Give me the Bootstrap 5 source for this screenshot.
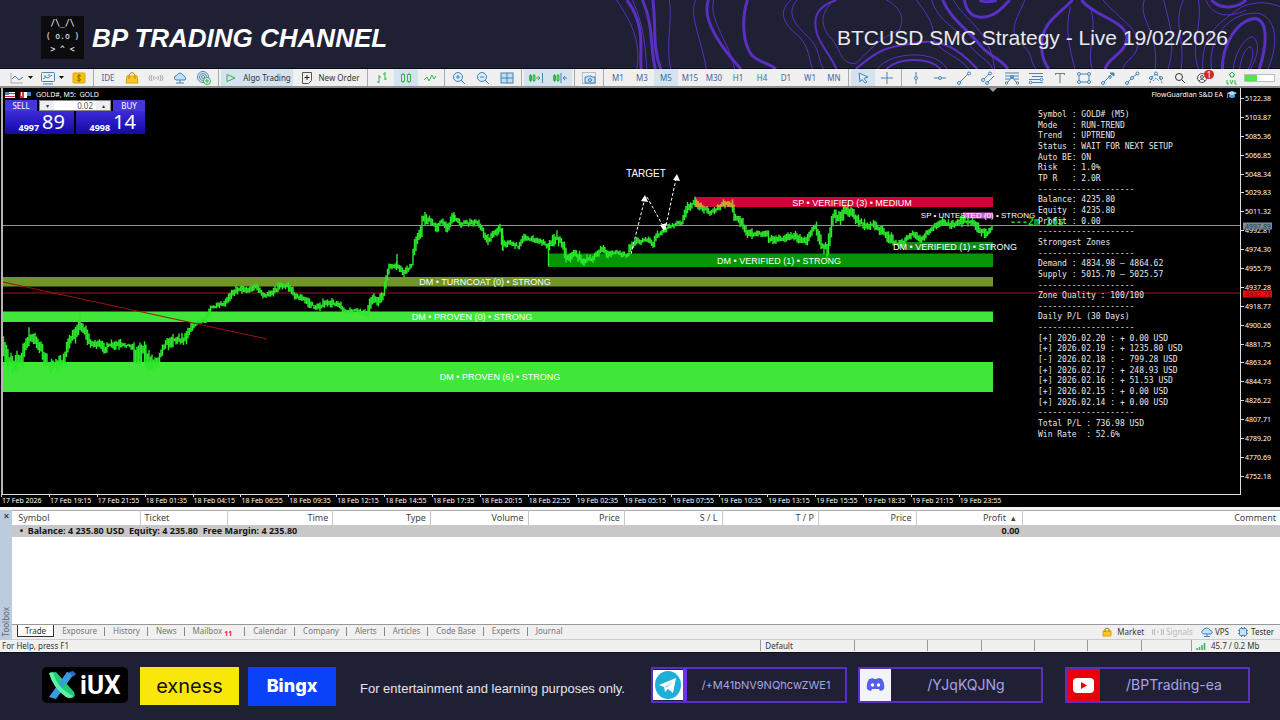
<!DOCTYPE html>
<html lang="en">
<head>
<meta charset="utf-8">
<meta name="viewport" content="width=device-width, initial-scale=1">
<title>BP Trading Channel</title>
<link href="https://cdn.jsdelivr.net/npm/bootstrap@5.3.0/dist/css/bootstrap.min.css" rel="stylesheet">
<style>
  :root { --navy: #1f2034; --violet: #5a2fc4; --ui: "Noto Sans", "Open Sans", sans-serif; }
  body { background: var(--navy); font-family: var(--ui); font-size: 8px; line-height: 12px; color: #222; }
  button { border: 0; background: none; padding: 0; color: inherit; font: inherit; }
  svg { display: block; }

  .banner { height: 69px; padding: 7px 52px 0 41px; color: #fff; border-bottom: 1px solid #0c0c16; }
  .contours { top: 0; right: 0; width: 53.125%; height: 69px; }
  .contours path { fill: none; stroke: var(--violet); stroke-width: 1; vector-effect: non-scaling-stroke; }
  .contours .wide { stroke-width: 3; }
  .catbox { width: 43px; height: 43px; background: #0c0c0e; font: 8px/13px "DejaVu Sans Mono", monospace; margin: 0; overflow: hidden; padding-top: 1px; }
  .brand-title { font: italic 700 26px/44px "Liberation Sans", sans-serif; margin: 0; }
  .show-title { font: 21px/44px "Liberation Sans", sans-serif; margin: 0; color: #e9e9ee; }

  .toolbar { height: 19px; background: #f0f0f0; border-bottom: 2px solid #8e8e8e; padding-left: 5px; color: #3b6a99; overflow: hidden; }
  .toolbar button { width: 24px; height: 17px; flex: none; display: flex; align-items: center; justify-content: center; }
  .toolbar .on { background: #d5e2f0; }
  .toolbar .w-drop { width: 31px; gap: 3px; }
  .toolbar .w-text { width: 72px; gap: 4px; color: #333; }
  .toolbar svg { flex: none; width: 16px; height: 14px; fill: none; stroke: #4583b8; stroke-width: 1; }
  .toolbar .caret { width: 5px; height: 3px; fill: #111; stroke: none; }
  .toolbar .grn { stroke: #35b545; }
  .toolbar .gry { stroke: #aaa; }
  .divider { flex: none; width: 1px; height: 17px; margin: 0 2px; background: #aaa; }
  .battery { width: 31px; height: 8px; background: linear-gradient(90deg, #4be84b 40%, #fff 40%); border: 1px solid #bbb; }
  .alerts { top: 1px; right: 2px; width: 10px; height: 9px; border-radius: 5px; background: #d12b22; color: #fff; font-size: 8px; line-height: 9px; }

  .chart { flex: 1 0 419px; background: #000; color: #fff; padding-left: 1px; }
  .plot { border-left: 2px solid #b8b4b4; border-bottom: 1px solid #ddd; min-width: 0; }
  .plot > svg { inset: 0; width: 100%; height: 100%; }
  .note { transform: translate(-50%, -50%); font: 9px/10px "Liberation Sans", sans-serif; white-space: nowrap; }
  .note.big { font-size: 10px; }
  .note.tiny { font-size: 8px; }
  .note.clock { color: #21d321; font: 700 10px/10px "DejaVu Sans Mono", monospace; }
  .quote { top: 2px; left: 2px; width: 140px; }
  .quote-name { height: 10px; font-size: 7px; line-height: 10px; gap: 5px; }
  .quote-top { height: 11px; }
  .quote-top button { background: #4536dc; width: 32px; line-height: 11px; color: #fff; }
  .lots { background: #fff; border: 1px solid #888; }
  .lots button { width: 14px; background: #eee; color: #333; font-size: 6px; line-height: 8px; }
  .lots input { width: 42px; border: 0; padding: 0 3px 0 0; text-align: right; font: 8px/9px var(--ui); color: #555; height: 9px; }
  .price { width: 69px; height: 23px; background: linear-gradient(#3b2bd6, #1408a8); line-height: 24px; gap: 3px; padding-right: 9px; }
  .price b { font-size: 9px; line-height: 12px; }
  .price span { font-size: 20px; }
  .ea { top: 2px; right: 3px; font-size: 7px; line-height: 9px; gap: 4px; }
  .stats { top: 22px; right: 50px; bottom: 54px; width: 152px; font: 8px/10px "DejaVu Sans Mono", monospace; white-space: pre; color: #e8e8e8; }
  .axis-y { width: 40px; border-left: 1px solid #ddd; padding: 6px 0 14px; font-size: 7px; line-height: 9px; }
  .axis-y .tick { padding-left: 4px; position: relative; }
  .axis-y .tick::before { content: ""; position: absolute; left: 0; top: 4px; width: 3px; height: 1px; background: #ddd; }
  .tag { left: 2px; width: 29px; height: 7px; font-size: 7px; line-height: 7px; padding-left: 2px; transform: translateY(-50%); }
  .axis-x { height: 12px; font-size: 7px; line-height: 12px; white-space: nowrap; overflow: hidden; }
  .axis-x span { flex: 0 0 3.745%; border-left: 1px solid transparent; border-image: linear-gradient(#ddd 25%, transparent 25%) 1; }

  .toolbox { flex: 0 0 133px; background: #fff; border-top: 3px solid #f4f4f4; }
  .side { width: 12px; background: #bccbdd; color: #222; }
  .side span { writing-mode: vertical-rl; transform: rotate(180deg); color: #5a6472; line-height: 12px; padding-top: 4px; }
  .orders { table-layout: fixed; width: 100%; border-collapse: collapse; border-top: 1px solid #aaa; font-size: 9px; }
  .orders th { font-weight: 400; text-align: right; height: 14px; padding: 0 4px; border-right: 1px solid #c8c8c8; color: #444; line-height: 12px; }
  .orders th.lt { text-align: left; }
  .orders td { background: #c8c8c8; font-weight: 700; height: 12px; padding: 0 3px; line-height: 11px; color: #151515; white-space: pre; }
  .tabs { height: 16px; background: #f0f0f0; border-top: 1px solid #999; border-bottom: 1px solid #ccc; color: #777; white-space: nowrap; overflow: hidden; }
  .tabs a { color: inherit; text-decoration: none; padding: 0 7px 0 8px; line-height: 11px; }
  .tabs .bar { border-right: 1px solid #888; height: 9px; line-height: 8px; margin-top: 2px; }
  .tabs .mail { padding-right: 12px; }
  .tabs .sel { background: #fff; color: #333; border: 1px solid #333; border-top: 0; height: 12px; margin-left: 5px; padding: 0 7px; }
  .tabs sub { color: #d8264a; font-weight: 700; font-size: 7px; line-height: 1; bottom: -2px; }
  .tools { gap: 8px; color: #333; padding-right: 6px; }
  .tools svg { width: 12px; height: 10px; fill: none; stroke: #3d83bd; }
  .status { flex: 0 0 13px; background: #f0f0f0; border-bottom: 1px solid #10101c; color: #333; white-space: nowrap; overflow: hidden; }
  .status span { border-left: 1px solid #999; height: 11px; padding-left: 4px; line-height: 11px; }

  .foot { flex: 0 0 67px; color: #fff; padding: 14px 30px 0 42px; overflow: hidden; }
  .logo { flex: none; }
  .iux { width: 86px; height: 36px; border-radius: 5px; background: #000; font: 700 26px/36px Roboto, sans-serif; margin-right: 12px; padding-left: 5px; gap: 2px; }
  .exness { width: 99px; height: 38px; background: #fae70a; color: #111; font: 20px/38px Inter, sans-serif; margin-right: 9px; }
  .bingx { width: 88px; height: 39px; background: #0a42fa; font: 800 18px/38px Inter, sans-serif; margin-right: 24px; }
  .fine { font: 13px/44px "Liberation Sans", sans-serif; white-space: nowrap; color: #e4e4ea; }
  .social { border: 2px solid var(--violet); height: 36px; color: #a9a2e6; text-decoration: none; font: 14px/32px Inter, sans-serif; flex: none; }
  .social .long { font-size: 11px; }
  .social:hover { color: #fff; }
  .social svg { flex: none; height: 32px; }
</style>
</head>
<body class="d-flex flex-column min-vh-100">

<header class="banner position-relative d-flex align-items-center justify-content-between">
  <svg class="contours position-absolute" viewBox="0 0 1568 206" preserveAspectRatio="none" aria-hidden="true">
    <path d="M38 0C70 60 95 120 85 206M160 0C168 70 150 130 163 206M220 0C205 50 235 120 245 206M75 0C105 90 104 150 108 206"/>
    <path class="wide" d="M62 0C108 80 90 150 95 206M98 0C125 80 115 150 128 206M122 0C130 80 120 140 140 206"/>
    <path class="wide" d="M250 0C232 60 285 150 325 206M340 0C325 60 330 130 350 165C370 190 395 190 405 206"/>
    <path d="M262 0C250 60 300 130 310 206M440 0C405 40 430 80 460 110C485 150 480 170 490 206M455 0C425 40 455 80 480 110C510 150 500 170 515 206"/>
    <path style="stroke-width:2" d="M545 0C500 20 490 50 500 100C515 150 530 160 545 206M590 206C640 150 660 140 720 130C790 110 830 150 870 206M660 206C690 170 760 170 785 206"/>
    <path d="M540 0C505 40 510 80 530 110C560 150 550 190 590 190C620 150 650 110 690 90C705 50 690 20 660 0M640 206C670 150 780 150 800 206"/>
    <path class="wide" d="M790 0C810 60 850 90 880 140C900 170 930 180 940 206M840 0C850 70 900 60 930 20L945 0M875 0C885 8 900 6 915 0"/>
    <path d="M730 0C750 40 770 60 770 120C790 160 830 170 850 206M765 0C775 60 830 90 850 130C870 170 900 180 905 206M815 0C840 60 900 90 910 206M980 0C960 60 940 90 970 130C1000 160 990 180 1005 206"/>
    <path class="wide" d="M1090 0C1060 40 1030 60 1020 110C1015 150 1020 180 1035 206M1110 0C1140 50 1210 60 1215 110C1215 160 1170 170 1165 206"/>
    <path d="M1160 0C1190 50 1240 80 1240 130C1240 170 1210 180 1205 206M1085 20C1070 90 1085 150 1095 206M1130 20C1150 90 1120 150 1135 206M1255 0C1240 60 1290 90 1280 206M1300 0C1310 60 1330 120 1310 206M1345 0C1320 70 1350 120 1340 206M1380 0C1390 80 1360 130 1380 206"/>
    <path class="wide" d="M1410 0C1430 30 1470 25 1490 0M1435 206C1435 130 1470 60 1510 55C1545 60 1535 150 1520 206"/>
    <path d="M1460 206C1465 150 1490 110 1505 110C1525 130 1515 170 1500 206M1475 206C1478 170 1490 140 1500 140C1510 150 1505 180 1495 206M1410 206C1400 120 1450 30 1520 40C1568 60 1560 150 1540 206M1390 206C1385 90 1440 60 1480 20C1520 0 1550 10 1568 20M1397 0C1410 40 1440 60 1490 30"/>
  </svg>
  <div class="d-flex align-items-center position-relative gap-2">
    <pre class="catbox text-center">/\_/\
( o.o )
&gt; ^ &lt;</pre>
    <h1 class="brand-title">BP TRADING CHANNEL</h1>
  </div>
  <h2 class="show-title position-relative">BTCUSD SMC Strategy - Live 19/02/2026</h2>
</header>

<nav class="toolbar d-flex" aria-label="Chart tools">
  <button class="w-drop" aria-label="Chart type"><svg viewBox="0 0 16 14"><path d="M2 2v10h12" stroke="#aaa"/><path d="M3 8l3-3 4 4 4-3"/></svg><svg class="caret" viewBox="0 0 5 3"><path d="M0 0h5L2.500 3z"/></svg></button>
  <button class="w-drop" aria-label="Templates"><svg viewBox="0 0 16 14"><rect x="1.500" y="1.500" width="13" height="9" rx="1"/><path d="M3 8l3-2 2 1 4-3M3 13h10M4 5h2M8 4h2"/></svg><svg class="caret" viewBox="0 0 5 3"><path d="M0 0h5L2.500 3z"/></svg></button>
  <button aria-label="Deposit"><svg viewBox="0 0 16 14"><rect x="2" y="2" width="12" height="10" rx="1" fill="#f5c211" stroke="#e0a800"/><path d="M10 5C8 4 6 4.500 6.500 6S10 7.500 9.500 9 7 9.500 6 9M8 3v8" stroke="#8a6a00"/></svg></button>
  <i class="divider"></i>
  <button>IDE</button>
  <button aria-label="Market"><svg viewBox="0 0 16 14"><path d="M3 5h10l1 7H2z" fill="#f8c81c" stroke="#d9a400"/><path d="M5 8V4q3-5 6 0v4" stroke="#b98a00"/></svg></button>
  <button aria-label="Signals"><svg class="gry" viewBox="0 0 16 14"><path d="M4 4q-2 3 0 6M2 4q-2 3 0 6M12 4q2 3 0 6M14 4q2 3 0 6M6 5q-1 2 0 4M10 5q1 2 0 4"/><circle cx="8" cy="7" r=".5"/></svg></button>
  <button aria-label="VPS"><svg viewBox="0 0 16 14"><path d="M4 9q-3-1-1-4 2 0 2-1 3-4 6 0l1 1q3 1 1 4z" fill="#bfe0f7"/><path d="M8 9v3M4 12h8"/></svg></button>
  <button aria-label="Community"><svg viewBox="0 0 16 14"><circle cx="7" cy="6" r="5.500"/><circle cx="7" cy="6" r="3.500"/><circle cx="7" cy="6" r="1.500"/><circle cx="11" cy="10" r="3.500" fill="#f0f0f0" stroke="#35b545"/><path class="grn" d="M11 8v4M9 10h4"/></svg></button>
  <i class="divider"></i>
  <button class="w-text on"><svg class="grn" viewBox="0 0 16 14"><path d="M4 3.500L12 7l-8 3.500z"/></svg><span>Algo Trading</span></button>
  <button class="w-text"><svg viewBox="0 0 16 14"><path d="M3.500 1.500h9v8l-3 3h-6z" stroke="#555"/><path d="M8 4v5M5.500 6.500h5" stroke="#222"/></svg><span>New Order</span></button>
  <i class="divider"></i>
  <button aria-label="Bars"><svg class="grn" viewBox="0 0 16 14"><path d="M5 4v8M3 11h2M5 6h2M11 1v8M9 3h2M11 8h2"/></svg></button>
  <button class="on" aria-label="Candles"><svg class="grn" viewBox="0 0 16 14"><path d="M3.500 3.500h3v7h-3zM9.500 3.500h3v7h-3zM5 2v1.500M5 10.500V12M11 2v1.500M11 10.500V12"/></svg></button>
  <button aria-label="Line"><svg class="grn" viewBox="0 0 16 14"><path d="M2 9l3-3 2 4 3-6 2 4 2-3"/></svg></button>
  <i class="divider"></i>
  <button aria-label="Zoom in"><svg viewBox="0 0 16 14"><circle cx="7" cy="6" r="4.500" fill="#d9ecfa"/><path d="M10 9l4 4M7 4v4M5 6h4"/></svg></button>
  <button aria-label="Zoom out"><svg viewBox="0 0 16 14"><circle cx="7" cy="6" r="4.500" fill="#d9ecfa"/><path d="M10 9l4 4M5 6h4"/></svg></button>
  <button aria-label="Tile windows"><svg viewBox="0 0 16 14"><rect x="2" y="2" width="12" height="10" fill="#bfe0f7"/><path d="M8 2v10M2 7h12"/></svg></button>
  <i class="divider"></i>
  <button class="on" aria-label="Auto scroll"><svg viewBox="0 0 16 14"><path class="grn" d="M1.500 4.500h2v5h-2zM5 4.500h2v5H5zM2.500 3v8M6 3v8M8 7h4M10 5l2 2-2 2"/><path d="M14.500 2v10"/></svg></button>
  <button class="on" aria-label="Chart shift"><svg viewBox="0 0 16 14"><path class="grn" d="M1.500 4.500h2v5h-2zM5 4.500h2v5H5zM2.500 3v8M6 3v8"/><path d="M9 2v10M15 7h-4M13 5l-2 2 2 2"/></svg></button>
  <i class="divider"></i>
  <button aria-label="Screenshot"><svg viewBox="0 0 16 14"><path d="M1.500 1.500h13v11h-13z" stroke="#888" stroke-dasharray="1 1"/><path d="M4 6h2l1-1h3l1 1h3v6H4z" fill="#bfe0f7"/><circle cx="9" cy="9" r="1.500"/></svg></button>
  <i class="divider"></i>
  <button>M1</button><button>M3</button><button class="on">M5</button><button>M15</button><button>M30</button><button>H1</button><button>H4</button><button>D1</button><button>W1</button><button>MN</button>
  <i class="divider"></i>
  <button class="on" aria-label="Cursor"><svg viewBox="0 0 16 14"><path d="M4 2l9 4-4 1.500 3 3.500-2 1-3-3.500L5 11z" fill="#d9ecfa"/></svg></button>
  <button aria-label="Crosshair"><svg viewBox="0 0 16 14"><path d="M8 1v4.500M8 8.500V13M2 7h4.500M9.500 7H14"/><circle cx="8" cy="7" r="1"/></svg></button>
  <i class="divider"></i>
  <button aria-label="Vertical line"><svg viewBox="0 0 16 14"><path d="M8 1v4M8 9v4"/><circle cx="8" cy="7" r="1.500"/></svg></button>
  <button aria-label="Horizontal line"><svg viewBox="0 0 16 14"><path d="M2 7h4M10 7h4"/><circle cx="8" cy="7" r="1.500"/></svg></button>
  <button aria-label="Trend line"><svg viewBox="0 0 16 14"><path d="M4 11l8-8"/><circle cx="3" cy="12" r="1.500"/><circle cx="13" cy="2.500" r="1.500"/></svg></button>
  <button aria-label="Channel"><svg viewBox="0 0 16 14"><path d="M4 8l5-5M8 11l6-6"/><circle cx="3" cy="9" r="1.500"/><circle cx="10" cy="2.500" r="1.500"/><circle cx="7" cy="12" r="1.500"/></svg></button>
  <button aria-label="Fibonacci"><svg viewBox="0 0 16 14"><path d="M1 2h14M1 5h14M1 8h5M10 8h5M3 12l5-6 5 6"/><circle cx="8" cy="6" r="1.500"/><circle cx="2.500" cy="12" r="1.200"/><circle cx="13.500" cy="12" r="1.200"/></svg></button>
  <button aria-label="Levels"><svg viewBox="0 0 16 14"><path d="M1 2.500h14M4 5.500h11M1 8.500h11M4 11.500h11"/><circle cx="2.500" cy="11.500" r="1.300"/><circle cx="13.500" cy="8.500" r="1.300"/></svg></button>
  <button aria-label="Text"><svg viewBox="0 0 16 14"><path d="M3.500 4V2.500h9V4M8 2.500V12"/></svg></button>
  <button aria-label="Rectangle"><svg viewBox="0 0 16 14"><rect x="3" y="3" width="10" height="8"/><g fill="#f0f0f0"><circle cx="3" cy="3" r="1.500"/><circle cx="13" cy="3" r="1.500"/><circle cx="3" cy="11" r="1.500"/><circle cx="13" cy="11" r="1.500"/></g></svg></button>
  <button aria-label="Arrow"><svg viewBox="0 0 16 14"><path d="M4 11l8-8"/><path d="M10 2h4v3z" fill="#4583b8"/><circle cx="3" cy="12" r="1.500"/><circle cx="10" cy="6" r="1.300"/></svg></button>
  <button aria-label="Polyline"><svg viewBox="0 0 16 14"><path d="M4 11l3-3M9 6l4-3"/><circle cx="3" cy="12" r="1.500"/><circle cx="8" cy="7" r="1.500"/><circle cx="13.500" cy="2.500" r="1.500"/></svg></button>
  <button aria-label="Shapes"><svg viewBox="0 0 16 14"><path d="M2 12l2-6 4-3 4 3 2 6M5 10l3-3 3 3" stroke-dasharray="2 1"/><circle cx="8" cy="2.500" r="1.500"/><circle cx="3" cy="7" r="1.500"/><circle cx="13" cy="7" r="1.500"/></svg></button>
  <button aria-label="Search"><svg viewBox="0 0 16 14"><circle cx="7" cy="6" r="3.500" stroke="#333"/><path d="M10 9l3 3" stroke="#333"/></svg></button>
  <button class="position-relative" aria-label="Account, 1 alert"><svg viewBox="0 0 16 14"><circle cx="6" cy="7" r="4.500" stroke="#555"/><path d="M3 10q3-4 6 0" stroke="#555"/><circle cx="6" cy="6" r="1.500" stroke="#555"/></svg><span class="alerts position-absolute">1</span></button>
  <button class="ms-1" aria-label="Level"><svg class="grn" viewBox="0 0 16 14"><path d="M8 1l3 3H9.500v2h-3V4H5zM3 9v4h2M6 9l1.500 4L9 9M11 9v4h2"/></svg></button>
  <div class="battery align-self-center flex-shrink-0"></div>
</nav>

<main class="chart d-flex flex-column">
  <div class="d-flex flex-grow-1">
    <section class="plot position-relative flex-grow-1 overflow-hidden">
      <svg class="position-absolute" viewBox="3 88 1237 406" preserveAspectRatio="none" aria-label="GOLD# M5 price chart">
        <defs><clipPath id="supply"><rect x="695" y="197" width="298" height="10"/></clipPath></defs>
        <rect x="3" y="277" width="990" height="9.500" fill="#6f9626"/>
        <rect x="3" y="311.500" width="990" height="10.500" fill="#40e738"/>
        <rect x="3" y="362" width="990" height="30" fill="#40e738"/>
        <rect x="548" y="253.500" width="445" height="13.500" fill="#079507"/>
        <rect x="903" y="242" width="90" height="8" fill="#0a8d12"/>
        <rect x="695" y="197" width="298" height="10" fill="#cf0438"/>
        <rect x="963" y="212.500" width="30" height="6" fill="#d45fd6"/>
        <path d="M3 293H1240" stroke="#b00c20"/>
        <path id="bars" stroke="#2be82b" stroke-width="1.400" fill="none"/>
        <path id="barsHot" stroke="#d8a030" stroke-width="1.400" fill="none" clip-path="url(#supply)"/>
        <path d="M3 282L267 339" stroke="#a30f12"/>
        <path d="M3 225.500H1240" stroke="#8d9494"/>
        <g stroke="#fff" stroke-dasharray="3 2" fill="none"><path d="M631 254L645 198M647 197L663 226M665 230L676 179"/></g>
        <path d="M645 195l-4 6 7 1zM664 231l-4-6 7-2zM677 174l-4 6 7 1z" fill="#fff"/>
        <path d="M989 88h8l-4 4z" fill="#999"/>
      </svg>
      <div id="notes"></div>

      <div class="quote position-absolute">
        <div class="quote-name d-flex align-items-center">
          <svg width="10" height="6" viewBox="0 0 10 6"><path fill="#fff" d="M0 0h10v6H0z"/><path stroke="#d24" d="M0 1.500h10M0 4.500h10"/><path fill="#48c" d="M0 0h4v3H0z"/></svg>
          <svg width="11" height="6" viewBox="0 0 11 6"><path fill="#d33" d="M0 0h4v6H0z"/><path fill="#fff" d="M4 0h3v6H4zM1 0h1v4H1z"/><path fill="#48c" d="M7 0h4v4H7z"/></svg>
          <span>GOLD#, M5:&nbsp; GOLD</span>
        </div>
        <div class="quote-top d-flex justify-content-between">
          <button>SELL</button>
          <div class="lots d-flex"><button aria-label="Less">▾</button><input aria-label="Lots" value="0.02"><button aria-label="More">▴</button></div>
          <button>BUY</button>
        </div>
        <div class="d-flex justify-content-between">
          <div class="price d-flex align-items-end justify-content-end"><b>4997</b><span>89</span></div>
          <div class="price d-flex align-items-end justify-content-end"><b>4998</b><span>14</span></div>
        </div>
      </div>

      <div class="ea position-absolute d-flex align-items-center">FlowGuardian S&amp;D EA
        <svg width="10" height="8" viewBox="0 0 10 8"><path d="M0 2l5-2 5 2-5 3z" fill="#9fdcff"/><path d="M2 4v2q3 2 6 0V4" fill="#4aa8dc"/><path d="M.5 2v5" stroke="#4aa8dc"/></svg>
      </div>
      <div id="stats" class="stats position-absolute d-flex flex-column justify-content-between"></div>
    </section>
    <aside id="axisY" class="axis-y position-relative d-flex flex-column justify-content-between"></aside>
  </div>
  <div id="axisX" class="axis-x d-flex"></div>
</main>

<section class="toolbox d-flex">
  <div class="side d-flex flex-column justify-content-between align-items-center">
    <button aria-label="Close toolbox">✕</button><span>Toolbox</span>
  </div>
  <div class="flex-grow-1 d-flex flex-column justify-content-between" style="min-width:0">
    <table class="orders">
      <colgroup><col style="width:10.1%"><col style="width:6.9%"><col style="width:8.3%"><col style="width:7.700%"><col style="width:7.700%"><col style="width:7.600%"><col style="width:7.700%"><col style="width:7.600%"><col style="width:7.700%"><col style="width:8.400%"><col></colgroup>
      <thead><tr><th class="lt">&nbsp;Symbol</th><th class="lt">Ticket</th><th>Time</th><th>Type</th><th>Volume</th><th>Price</th><th>S / L</th><th>T / P</th><th>Price</th><th>Profit &nbsp;▴&nbsp;</th><th class="border-0">Comment</th></tr></thead>
      <tbody><tr><td colspan="9">  •  Balance: 4 235.80 USD  Equity: 4 235.80  Free Margin: 4 235.80</td><td class="text-end">0.00</td><td></td></tr></tbody>
    </table>
    <div class="tabs d-flex">
      <a class="sel" href="#">Trade</a><a class="bar" href="#">Exposure</a><a class="bar" href="#">History</a><a class="bar" href="#">News</a><a class="bar mail" href="#">Mailbox <sub>11</sub></a><a class="bar" href="#">Calendar</a><a class="bar" href="#">Company</a><a class="bar" href="#">Alerts</a><a class="bar" href="#">Articles</a><a class="bar" href="#">Code Base</a><a class="bar" href="#">Experts</a><a class="bar border-0" href="#">Journal</a>
      <div class="tools d-flex ms-auto">
        <button class="d-flex align-items-center gap-1"><svg viewBox="0 0 12 10"><path d="M2 4h8v5H2z" fill="#f8c81c" stroke="#d9a400"/><path d="M4 5V2q2-2 4 0v3" stroke="#a87c00"/></svg>Market</button>
        <button class="d-flex align-items-center text-black-50 opacity-50"><svg viewBox="0 0 12 10"><path d="M3 2q-2 3 0 6M1 2q-1 3 0 6M9 2q2 3 0 6M11 2q1 3 0 6M6 4v2" stroke="#888"/></svg>&nbsp;Signals</button>
        <button class="d-flex align-items-center"><svg viewBox="0 0 12 10"><path d="M3 7q-4-1-1-4 4-4 7 0 4 2 1 4z" fill="#bfe0f7"/><path d="M6 7v2M3 9.500h6"/></svg>&nbsp;VPS</button>
        <button class="d-flex align-items-center"><svg viewBox="0 0 12 10"><rect x="2.500" y="1.500" width="7" height="7" rx="1" fill="#bfe0f7"/><path d="M1 3.500h1M1 6.500h1M10 3.500h1M10 6.500h1M4.500 0v1M7.500 0v1M4.500 9v1M7.500 9v1"/></svg>&nbsp;Tester</button>
      </div>
    </div>
  </div>
</section>

<div class="status row g-0 flex-nowrap">
  <div class="col" style="padding-left:2px">For Help, press F1</div>
  <div class="d-flex" style="width:40.600%">
    <span style="flex:96">Default</span><span style="flex:73"></span><span style="flex:53"></span><span style="flex:53"></span><span style="flex:51"></span><span style="flex:53"></span><span style="flex:49"></span>
    <span class="d-flex align-items-center gap-1" style="flex:91"><svg width="11" height="8" viewBox="0 0 11 8"><path d="M1 6v2M3.500 5v3M6 3v5M8.500 1v7" stroke="#3cae4a" stroke-width="1.500"/></svg>45.7 / 0.2 Mb</span>
  </div>
</div>

<footer class="foot d-flex align-items-start">
  <div class="logo iux d-flex align-items-center">
    <svg width="31" height="34" viewBox="0 0 31 34"><path d="M2 29L20 4l7 2-6 8L9 31z" fill="#3a9be0"/><path d="M22 4l4-1 3 3-3 3z" fill="#2c6cc0"/><path d="M2 5l7-1 18 20q3 7-6 6Q8 22 2 5z" fill="#20c878"/><path d="M2 5l4-1q4 16 20 24-3 3-7 1Q6 20 2 5z" fill="#5cf2a4"/><path d="M12 16l5-7 3 3-5 8z" fill="#3a9be0"/></svg>iUX
  </div>
  <div class="logo exness text-center">exness</div>
  <div class="logo bingx text-center">Bingx</div>
  <div class="fine">For entertainment and learning purposes only.</div>
  <a class="social d-flex ms-auto" href="#" style="width:196px;margin-right:11px">
    <svg width="34" viewBox="0 0 34 32"><path fill="#fff" d="M0 1h30v30H0z"/><path fill="#6a35e0" d="M30 0h4v32h-4z"/><ellipse cx="15" cy="16" rx="13" ry="14" fill="#1cb0d8"/><path d="M6 16l17-7-3 15-5-4-3 3-1-5z" fill="#fff"/><path d="M11 18l9-6-6 7" fill="#b8e4f2"/></svg>
    <span class="flex-grow-1 text-center long">/+M41bNV9NQhcwZWE1</span></a>
  <a class="social d-flex" href="#" style="width:185px;margin-right:22px">
    <svg width="31" viewBox="0 0 31 32"><path fill="#f3f3fa" d="M0 0h31v32H0z"/><path d="M10 11q2-1 3-1l1 1h3l1-1q2 0 4 1 3 5 2 10-2 2-4 2l-1-2h-7l-1 2q-2 0-4-2-1-5 2-10z" fill="#5560e6" transform="translate(0 -1)"/><circle cx="12.500" cy="16" r="1.700" fill="#fff"/><circle cx="18.500" cy="16" r="1.700" fill="#fff"/></svg>
    <span class="flex-grow-1 text-center">/YJqKQJNg</span></a>
  <a class="social d-flex" href="#" style="width:185px">
    <svg width="33" viewBox="0 0 33 32"><path fill="#e8000b" d="M0 0h33v32H0z"/><rect x="6" y="9" width="21" height="15" rx="4" fill="#fff"/><path d="M14 13v7l6-3.500z" fill="#e8000b"/></svg>
    <span class="flex-grow-1 text-center">/BPTrading-ea</span></a>
</footer>

<script>
  // Plot space: x 3..1240, y 88..494
  const X0 = 3, W = 1237, Y0 = 88, H = 406;

  // Mid-price trace: x, y, bar spread
  const trace = [[3,350,12],[8,360,12],[15,363,10],[22,357,10],[26,345,7],[29,336,7],[36,341,6],[42,349,6],[46,363,8],[54,367,7],[64,360,6],[68,345,6],[75,335,6],[80,325,5],[86,333,5],[90,343,5],[98,344,5],[104,348,5],[112,345,5],[120,345,5],[127,345,2],[133,347,2],[135,357,12],[143,350,10],[150,364,9],[158,360,6],[163,347,6],[173,340,7],[186,338,5],[192,326,5],[200,321,3],[205,320,2],[211,308,2],[225,304,2],[232,293,3],[240,288,4],[248,291,3],[256,286,3],[264,296,3],[272,293,3],[280,286,4],[288,286,3],[295,295,3],[305,300,4],[317,308,3],[324,304,4],[338,303,4],[345,312,2],[355,310,2],[367,313,4],[373,297,4],[378,303,3],[384,293,3],[387,276,6],[390,267,3],[398,266,4],[403,272,4],[412,266,4],[415,245,6],[421,231,5],[423,220,8],[428,220,6],[437,227,4],[442,222,4],[448,228,4],[453,216,4],[462,224,3],[478,222,3],[488,240,4],[500,228,3],[503,244,5],[510,243,3],[518,246,3],[525,238,3],[540,241,2],[548,246,4],[557,237,5],[564,246,4],[567,259,5],[575,253,4],[583,261,5],[593,258,3],[603,248,2],[608,255,3],[615,252,3],[628,255,2],[630,247,4],[637,241,3],[648,240,3],[653,244,3],[657,235,3],[663,232,2],[668,227,2],[682,222,2],[688,207,3],[695,203,4],[704,208,4],[710,213,4],[716,210,3],[723,204,4],[732,204,3],[735,218,5],[742,222,4],[748,235,5],[767,232,4],[769,238,4],[780,240,4],[793,236,5],[807,241,4],[813,228,3],[816,228,4],[822,246,5],[827,249,7],[830,235,7],[834,214,6],[840,218,6],[845,208,7],[853,214,5],[863,224,5],[872,224,5],[880,230,5],[897,244,5],[903,243,4],[913,233,2],[920,240,3],[930,231,2],[942,221,3],[953,226,4],[963,221,5],[973,222,4],[980,230,4],[987,233,5],[993,228,2]];
  let seed = 7;
  const rnd = () => (seed = (seed * 16807) % 2147483647) / 2147483647;
  let d = '', k = 0;
  for (let x = 3.5; x <= 993; x += 1.5) {
    while (k < trace.length - 2 && trace[k + 1][0] < x) k++;
    const a = trace[k], b = trace[k + 1], t = (x - a[0]) / (b[0] - a[0]);
    const mid = a[1] + (b[1] - a[1]) * t + (rnd() - .5) * 2, amp = a[2] + (b[2] - a[2]) * t;
    const slope = Math.min(5, Math.abs((b[1] - a[1]) / (b[0] - a[0])));
    d += `M${x} ${(mid - slope - .8 - amp * rnd()).toFixed(1)}V${(mid + slope + .8 + amp * rnd()).toFixed(1)}`;
  }
  d += 'M80 314V330M397 254V268M548.500 243V266M502.500 228V250M827 245V259M454 212V222';
  bars.setAttribute('d', d);
  barsHot.setAttribute('d', d);

  [['TARGET',646,174,'big'],['SP • VERIFIED (3) • MEDIUM',852,203,''],['SP • UNTESTED (0) • STRONG',978,216,'tiny'],
   ['DM • VERIFIED (1) • STRONG',955,247,''],['DM • VERIFIED (1) • STRONG',779,261,''],['DM • TURNCOAT (0) • STRONG',485,282,''],
   ['DM • PROVEN (0) • STRONG',472,317,''],['DM • PROVEN (6) • STRONG',500,377,''],['---2m 16s',1037,222,'clock']]
  .forEach(([text, x, y, kind]) => notes.insertAdjacentHTML('beforeend',
    `<span class="note ${kind} position-absolute" style="left:${(x - X0) / W * 100}%;top:${(y - Y0) / H * 100}%">${text}</span>`));

  const rule = '-'.repeat(20);
  ['Symbol : GOLD# (M5)','Mode   : RUN-TREND','Trend  : UPTREND','Status : WAIT FOR NEXT SETUP','Auto BE: ON','Risk   : 1.0%','TP R   : 2.0R',rule,
   'Balance: 4235.80','Equity : 4235.80','Profit : 0.00',rule,'Strongest Zones',rule,'Demand : 4834.98 – 4864.62','Supply : 5015.70 – 5025.57',rule,
   'Zone Quality : 100/100',rule,'Daily P/L (30 Days)',rule,'[+] 2026.02.20 : + 0.00 USD','[+] 2026.02.19 : + 1235.80 USD','[-] 2026.02.18 : - 799.28 USD',
   '[+] 2026.02.17 : + 248.93 USD','[+] 2026.02.16 : + 51.53 USD','[+] 2026.02.15 : + 0.00 USD','[+] 2026.02.14 : + 0.00 USD',rule,
   'Total P/L : 736.98 USD','Win Rate  : 52.6%']
  .forEach(line => stats.insertAdjacentHTML('beforeend', `<div>${line}</div>`));

  for (let i = 0; i <= 20; i++)
    axisY.insertAdjacentHTML('beforeend', `<div class="tick">${(5122.38 - 18.51 * i).toFixed(2)}</div>`);
  [['4997.89',226,'#7d8b99','#26323c'],['4932.78',293,'#f00a14','#8a0008']].forEach(([p, y, bg, fg]) =>
    axisY.insertAdjacentHTML('beforeend', `<div class="tag position-absolute" style="top:${(y - Y0) / H * 100}%;background:${bg};color:${fg}">${p}</div>`));

  '17 Feb 2026,17 Feb 19:15,17 Feb 21:55,18 Feb 01:35,18 Feb 04:15,18 Feb 06:55,18 Feb 09:35,18 Feb 12:15,18 Feb 14:55,18 Feb 17:35,18 Feb 20:15,18 Feb 22:55,19 Feb 02:35,19 Feb 05:15,19 Feb 07:55,19 Feb 10:35,19 Feb 13:15,19 Feb 15:55,19 Feb 18:35,19 Feb 21:15,19 Feb 23:55'
    .split(',').forEach(t => axisX.insertAdjacentHTML('beforeend', `<span>${t}</span>`));
</script>
<script src="https://cdn.jsdelivr.net/npm/bootstrap@5.3.0/dist/js/bootstrap.bundle.min.js"></script>
</body>
</html>
